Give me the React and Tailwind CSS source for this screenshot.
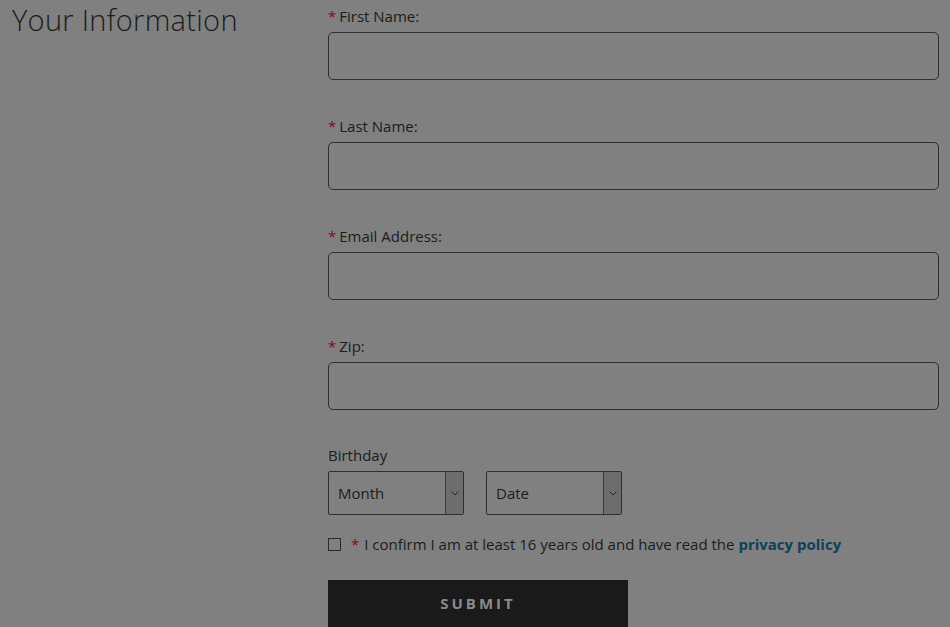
import React from 'react';

const Field = ({ label }) => (
    <div className="mb-[30px]">
        <label className="block text-[15px] leading-[18px] text-[#1c1c1c] mb-[7px] pt-[7px]">
            <span className="text-[#7d0c1f] mr-[3px]">*</span>{label}
        </label>
        <input className="block w-[611px] h-[48px] rounded-[5px] border border-[#2e2e2e] bg-transparent" />
    </div>
);

const Select = ({ label }) => (
    <div className="flex w-[136px] h-[44px] border border-[#2e2e2e] rounded-[2px] overflow-hidden">
        <div className="flex-1 flex items-center pl-[9px] pt-[1px] text-[15px] text-[#1c1c1c]">{label}</div>
        <div className="w-[18px] bg-[#6d6d6d] border-l border-[#3a3a3a] flex items-center justify-center">
            <svg width="8" height="5" viewBox="0 0 8 5" fill="none" stroke="#2a2a2a" strokeWidth="1">
                <path d="M0.5 0.5 L4 4 L7.5 0.5" />
            </svg>
        </div>
    </div>
);

const App = () => {
    return (
        <div className="w-[950px] h-[627px] bg-[#808080] overflow-hidden flex font-['Open_Sans',sans-serif]">
            {/* Heading */}
            <div className="w-[328px] pl-[12px]">
                <h2 className="text-[29px] leading-[40px] font-light text-[#1c1c1c] tracking-[0.3px]">Your Information</h2>
            </div>

            {/* Form */}
            <div className="flex flex-col">
                <Field label="First Name:" />
                <Field label="Last Name:" />
                <Field label="Email Address:" />
                <Field label="Zip:" />

                <div className="mt-[6px]">
                    <div className="text-[15px] leading-[18px] text-[#1c1c1c] mb-[7px]">Birthday</div>
                    <div className="flex gap-[22px]">
                        <Select label="Month" />
                        <Select label="Date" />
                    </div>
                </div>

                <div className="flex items-center h-[18px] mt-[20px] text-[15px] text-[#1c1c1c]">
                    <span className="w-[13px] h-[13px] border border-[#2a2a2a] mr-[10px]" />
                    <span className="text-[#7d0c1f] mr-[5px]">*</span>
                    <span>I confirm I am at least 16 years old and have read the <a href="/" className="font-bold text-[#0e4256]">privacy policy</a></span>
                </div>

                <button className="mt-[27px] w-[300px] h-[50px] bg-[#1a1a1a] text-[#8a8a8a] text-[15px] font-bold tracking-[3px] pb-[1px]">
                    SUBMIT
                </button>
            </div>
        </div>
    );
};

export default App;
